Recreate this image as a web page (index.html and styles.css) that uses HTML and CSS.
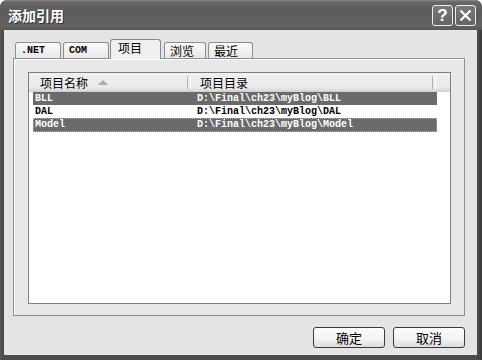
FILE: index.html
```html
<!DOCTYPE html>
<html lang="zh-CN">
<head>
    <meta charset="UTF-8">
    <title>添加引用</title>
    <link rel="stylesheet" href="styles.css">
</head>
<body>
    <div class="window">
        <div class="titlebar">
            <span class="title">添加引用</span>
            <div class="title-btns">
                <span class="tbtn help">?</span>
                <span class="tbtn close">
                    <svg width="13" height="13" viewBox="0 0 13 13">
                        <path d="M1.5 1.5 L11.5 11.5 M11.5 1.5 L1.5 11.5" stroke="#fff" stroke-width="2.2" fill="none"/>
                    </svg>
                </span>
            </div>
        </div>

        <div class="client">
            <div class="tabs">
                <span class="tab mono w-net">.NET</span>
                <span class="tab mono w-com">COM</span>
                <span class="tab active w-proj">项目</span>
                <span class="tab w-browse">浏览</span>
                <span class="tab w-recent">最近</span>
            </div>

            <div class="panel">
                <div class="list">
                    <div class="list-head">
                        <div class="hcol hcol-name">项目名称<span class="sort"></span></div>
                        <div class="hcol hcol-dir">项目目录</div>
                        <div class="hcol hcol-rest"></div>
                    </div>
                    <div class="rows">
                        <div class="row selected">
                            <span class="cell-name">BLL</span>
                            <span class="cell-dir">D:\Final\ch23\myBlog\BLL</span>
                        </div>
                        <div class="row">
                            <span class="cell-name">DAL</span>
                            <span class="cell-dir">D:\Final\ch23\myBlog\DAL</span>
                        </div>
                        <div class="row selected focused">
                            <span class="cell-name">Model</span>
                            <span class="cell-dir">D:\Final\ch23\myBlog\Model</span>
                        </div>
                    </div>
                </div>
            </div>

            <div class="actions">
                <button class="btn">确定</button>
                <button class="btn">取消</button>
            </div>
        </div>
    </div>
</body>
</html>
```

FILE: styles.css
```css
/* Reset */
* {
    margin: 0;
    padding: 0;
    box-sizing: border-box;
}

body {
    background: #fff;
    font-family: "Noto Sans CJK SC", "Liberation Sans", sans-serif;
    color: #000;
}

/* Window frame */
.window {
    width: 482px;
    height: 360px;
    display: flex;
    flex-direction: column;
    background: linear-gradient(to right, #5a5a5a, #4c4c4c 2px, #4c4c4c 477px, #3a3a3a);
    border-radius: 7px 7px 0 0;
    overflow: hidden;
}

/* Title bar */
.titlebar {
    height: 30px;
    display: flex;
    align-items: center;
    justify-content: space-between;
    padding: 0 6px 0 8px;
    background: linear-gradient(#8a8a8a, #666 2px, #5c5c5c 12px, #626262 26px, #585858);
}

.title {
    color: #fff;
    font-size: 14px;
    font-weight: bold;
    text-shadow: 1px 1px 0 #333;
}

.title-btns {
    display: flex;
    gap: 2px;
    margin-top: 1px;
}

.tbtn {
    width: 21px;
    height: 21px;
    border: 1px solid #eee;
    border-radius: 3px;
    background: linear-gradient(#7a7a7a, #636363);
    color: #fff;
    display: flex;
    align-items: center;
    justify-content: center;
}

.tbtn.help {
    font-family: "Liberation Sans", sans-serif;
    font-size: 17px;
    font-weight: bold;
}

/* Client area */
.client {
    flex: 1;
    margin: 0 5px 5px 4px;
    background: #e4e4e4;
    padding: 9px 12px 0 9px;
    display: flex;
    flex-direction: column;
}

/* Tabs */
.tabs {
    height: 19px;
    display: flex;
    align-items: flex-end;
    padding-left: 2px;
    gap: 2px;
    position: relative;
    z-index: 1;
}

.tab {
    height: 16px;
    border: 1px solid #8e8e8e;
    border-bottom: none;
    border-radius: 3px 3px 0 0;
    background: linear-gradient(#fafafa, #e8e8e8);
    font-size: 12px;
    line-height: 15px;
    padding-left: 5px;
}

.tab.mono {
    font-family: "Liberation Mono", monospace;
    font-size: 10px;
    font-weight: bold;
    line-height: 16px;
}

.tab.active {
    height: 20px;
    margin-bottom: -1px;
    margin-left: -1px;
    background: #f0f0f0;
    padding-left: 7px;
    line-height: 16px;
    border-color: #8a8a8a;
}

.w-net { width: 46px; }
.w-com { width: 46px; }
.w-proj { width: 51px; }
.w-browse { width: 42px; margin-left: 1px; }
.w-recent { width: 45px; }

/* Tab panel */
.panel {
    height: 258px;
    border: 1px solid #8e8e8e;
    box-shadow: inset 1px 1px 0 #fff;
    background: #e8e8e8;
    padding: 13px 13px 11px 14px;
}

.list {
    height: 100%;
    border: 1px solid #7f7f7f;
    background: #fff;
}

.list-head {
    height: 19px;
    display: flex;
    background: linear-gradient(#f0f0f0, #ebebeb 14px, #d8d8d8);
    border-bottom: 1px solid #cfcfcf;
    font-size: 12px;
    line-height: 17px;
}

.hcol {
    position: relative;
    display: flex;
    align-items: center;
}

.hcol-name {
    width: 162px;
    padding-left: 11px;
}

.hcol-dir {
    width: 245px;
    padding-left: 9px;
}

.hcol-name::after,
.hcol-dir::after {
    content: "";
    position: absolute;
    right: 0;
    top: 3px;
    width: 2px;
    height: 13px;
    border-left: 1px solid #b5b5b5;
    border-right: 1px solid #fff;
}

.sort {
    width: 0;
    height: 0;
    margin-left: 10px;
    border-left: 5px solid transparent;
    border-right: 5px solid transparent;
    border-bottom: 5px solid #ababab;
}

/* Rows */
.rows {
    padding-left: 4px;
}

.row {
    width: 404px;
    height: 13px;
    display: flex;
    font-family: "Liberation Mono", monospace;
    font-size: 10px;
    font-weight: bold;
    line-height: 13px;
}

.row.selected {
    background: #6a6a6a;
    color: #fff;
}

.row.focused {
    outline: 1px dotted #b0b0b0;
    outline-offset: -1px;
    height: 14px;
}

.cell-name {
    width: 162px;
    padding-left: 2px;
}

.cell-dir {
    padding-left: 2px;
}

/* Buttons */
.actions {
    display: flex;
    justify-content: flex-end;
    gap: 8px;
    margin-top: 11px;
}

.btn {
    width: 72px;
    height: 21px;
    border: 1px solid #3c3c3c;
    border-radius: 3px;
    background: linear-gradient(#fdfdfd, #f2f2f2 60%, #dcdcdc);
    font-family: "Noto Sans CJK SC", sans-serif;
    font-size: 13px;
    line-height: 18px;
    color: #000;
}
```
